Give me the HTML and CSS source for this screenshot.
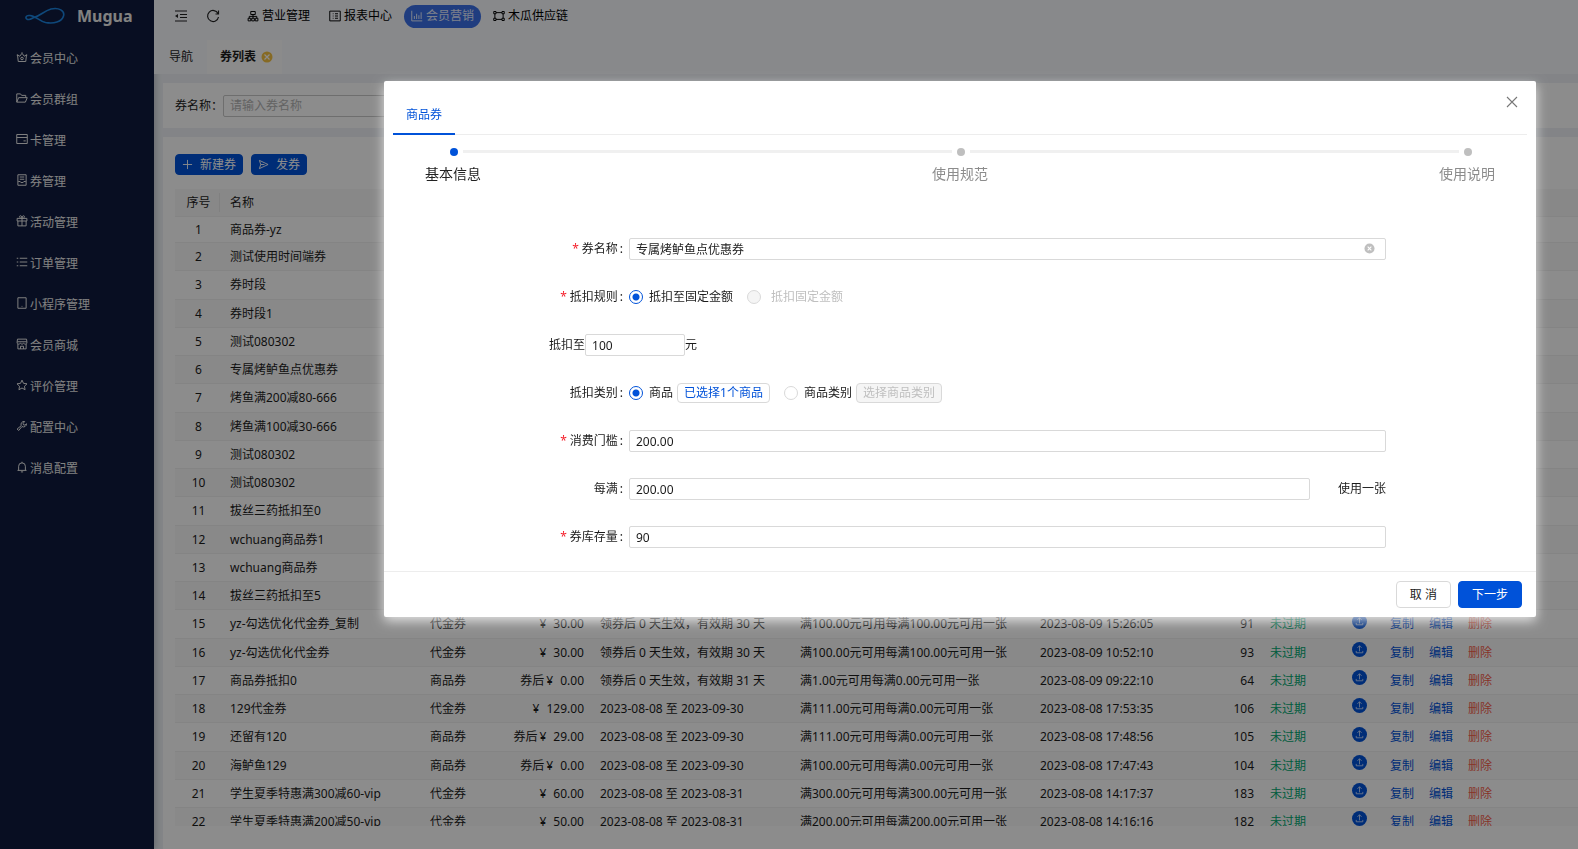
FILE: index.html
```html
<!DOCTYPE html>
<html lang="zh-CN">
<head>
<meta charset="utf-8">
<title>Mugua 券列表</title>
<link rel="stylesheet" href="styles.css">
</head>
<body>
<svg class="defs" aria-hidden="true">
  <symbol id="up" viewBox="0 0 16 16"><circle cx="8" cy="8" r="8" fill="#0052d9"/><path d="M8 10V4M5.800 6.200L8 4l2.200 2.200M4.500 9.500v2h7v-2" fill="none" stroke="#cfe0ff" stroke-width=".9"/></symbol>
</svg>
<div class="app">
  <aside class="sidebar">
    <div class="brand">
      <svg class="logo" viewBox="0 0 40 18"><path d="M9 10.500C15 9 19 4 26 2c8-2 14 2 12.500 7-1.500 6-10 8-18 6.500C14 14 11 9 5 8.500 0 8-.5 12.500 4 12.500c2 0 3.500-1.500 5-2" fill="none" stroke="#1b84e0" stroke-width="1.600"/></svg>
      <span>Mugua</span>
    </div>
    <nav class="menu">
      <a href="#"><svg class="ico" viewBox="0 0 16 16"><path d="M2 5l3 2 3-4 3 4 3-2-1 9H3zM1 5.500h1M14 5.500h1M8 2.500v-1"/><circle cx="8" cy="10" r="1.700"/></svg>会员中心</a>
      <a href="#"><svg class="ico" viewBox="0 0 16 16"><path d="M1 13.500l2.500-6H15l-2.500 6zM1 13.500v-11h5l1.500 2H13v3"/></svg>会员群组</a>
      <a href="#"><svg class="ico" viewBox="0 0 16 16"><path d="M1 2h14v12H1zM1 6h14M10 10.500h3"/></svg>卡管理</a>
      <a href="#"><svg class="ico" viewBox="0 0 16 16"><path d="M2.500 1h11v14h-11zM5 4h6M5 7h6M3 10h2.500c0 2 5 2 5 0H13"/></svg>券管理</a>
      <a href="#"><svg class="ico" viewBox="0 0 16 16"><path d="M1.500 4.500h13V8h-13zM2.500 8v6.500h11V8M8 4.500v10M8 4.500C4 4.500 4 1 6 1s2 3.500 2 3.500S8 1 10 1s2 3.500-2 3.500"/></svg>活动管理</a>
      <a href="#"><svg class="ico" viewBox="0 0 16 16"><path d="M5 3h10M5 8h10M5 13h10M1 3h2M1 8h2M1 13h2"/></svg>订单管理</a>
      <a href="#"><svg class="ico" viewBox="0 0 16 16"><path d="M2.500 1h11v14h-11zM7.500 12.500h1"/></svg>小程序管理</a>
      <a href="#"><svg class="ico" viewBox="0 0 16 16"><path d="M2 1.500h12M2 1.500L1.500 5h13L14 1.500M1.500 5v2c1 1.500 3 1.500 4.300 0 1 1.500 3.400 1.500 4.400 0 1.300 1.500 3.300 1.500 4.300 0V5M2.500 8v6.500h11V8M6 14.500V11h4v3.500"/></svg>会员商城</a>
      <a href="#"><svg class="ico" viewBox="0 0 16 16"><path d="M8 1.500l2 4.300 4.700.600-3.400 3.300.800 4.600L8 12l-4.100 2.300.800-4.600L1.300 6.400 6 5.800z"/></svg>评价管理</a>
      <a href="#"><svg class="ico" viewBox="0 0 16 16"><path d="M14 5a4 4 0 0 1-6 3.700L3.500 14 1.500 12 7 7.500A4 4 0 0 1 11.500 2L9.500 4.500l.500 2 2 .300z"/></svg>配置中心</a>
      <a href="#"><svg class="ico" viewBox="0 0 16 16"><path d="M3.500 12.500V7a4.500 4.500 0 0 1 9 0v5.500M2 12.500h12M8 2.500V1M6.500 14.500h3"/></svg>消息配置</a>
    </nav>
  </aside>

  <div class="main">
    <header class="top">
      <div class="topbar">
        <button class="tool" aria-label="收起菜单"><svg viewBox="0 0 14 14"><path d="M1 2h12M6 5.500h7M6 8.500h7M1 12h12" /><path d="M4 5v4L1 7z" class="solid"/></svg></button>
        <button class="tool" aria-label="刷新"><svg viewBox="0 0 14 14"><path d="M12 4.500A5.500 5.500 0 1 0 12.500 8M12.500 1.500v3.500H9.500"/></svg></button>
        <nav class="modules">
          <a href="#"><svg class="ico" viewBox="0 0 16 16"><path d="M5 2h6v4H5zM1.500 11h3.500v3.500H1.500zM6.300 11h3.500v3.500H6.300zM11 11h3.500v3.500H11zM8 6v5M3 11V8.500h10V11"/></svg>营业管理</a>
          <a href="#"><svg class="ico" viewBox="0 0 16 16"><path d="M1 1.500h14v13H1zM5 5h1M5 8h1M5 11h1M8 5h4M8 8h4M8 11h4"/></svg>报表中心</a>
          <a href="#" class="current"><svg class="ico" viewBox="0 0 16 16"><path d="M1 1v13.500h14M4.500 12V8M7.500 12V5M10.500 12V7M13.500 12V3"/></svg>会员营销</a>
          <a href="#"><svg class="ico" viewBox="0 0 16 16"><path d="M1 2h3v3H1zM12 2h3v3h-3zM1 11h3v3H1zM12 11h3v3h-3zM4 3.500h8M4 12.500h8M2.500 5v6M13.500 5v6"/></svg>木瓜供应链</a>
        </nav>
      </div>
      <nav class="pages">
        <a href="#">导航</a>
        <a href="#" class="current">券列表<svg viewBox="0 0 12 12"><circle cx="6" cy="6" r="5.500" fill="#f5c242"/><path d="M3.500 3.500l5 5M8.500 3.500l-5 5" stroke="#fff" stroke-width="1.200"/></svg></a>
      </nav>
    </header>

    <section class="panel search">
      <label for="q">券名称：</label>
      <input id="q" class="field" type="text" placeholder="请输入券名称">
    </section>

    <section class="panel list">
      <div class="actions">
        <button class="btn primary"><svg viewBox="0 0 12 12"><path d="M6 1v10M1 6h10"/></svg>新建券</button>
        <button class="btn primary"><svg viewBox="0 0 12 12"><path d="M1.500 1.500L11 6l-9.500 4.500L3 6zM3 6h4"/></svg>发券</button>
      </div>
      <div class="scroll">
        <table>
          <colgroup><col class="c-no"><col class="c-name"><col class="c-type"><col class="c-price"><col class="c-valid"><col class="c-rule"><col class="c-time"><col class="c-stock"><col class="c-state"><col class="c-up"><col></colgroup>
          <thead><tr><th>序号</th><th>名称</th><th colspan="9"></th></tr></thead>
          <tbody>
            <tr><td>1</td><td>商品券-yz</td><td colspan="9"></td></tr>
            <tr><td>2</td><td>测试使用时间端券</td><td colspan="9"></td></tr>
            <tr><td>3</td><td>券时段</td><td colspan="9"></td></tr>
            <tr><td>4</td><td>券时段1</td><td colspan="9"></td></tr>
            <tr><td>5</td><td>测试080302</td><td colspan="9"></td></tr>
            <tr><td>6</td><td>专属烤鲈鱼点优惠券</td><td colspan="9"></td></tr>
            <tr><td>7</td><td>烤鱼满200减80-666</td><td colspan="9"></td></tr>
            <tr><td>8</td><td>烤鱼满100减30-666</td><td colspan="9"></td></tr>
            <tr><td>9</td><td>测试080302</td><td colspan="9"></td></tr>
            <tr><td>10</td><td>测试080302</td><td colspan="9"></td></tr>
            <tr><td>11</td><td>拔丝三药抵扣至0</td><td colspan="9"></td></tr>
            <tr><td>12</td><td>wchuang商品券1</td><td colspan="9"></td></tr>
            <tr><td>13</td><td>wchuang商品券</td><td colspan="9"></td></tr>
            <tr><td>14</td><td>拔丝三药抵扣至5</td><td colspan="9"></td></tr>
            <tr><td>15</td><td>yz-勾选优化代金券_复制</td><td>代金券</td><td class="num"><i>¥</i>30.00</td><td>领券后 0 天生效，有效期 30 天</td><td>满100.00元可用每满100.00元可用一张</td><td>2023-08-09 15:26:05</td><td class="num">91</td><td class="ok">未过期</td><td class="up"><button aria-label="上架"><svg><use href="#up"/></svg></button></td><td class="ops"><a href="#">复制</a><a href="#">编辑</a><a href="#" class="del">删除</a></td></tr>
            <tr><td>16</td><td>yz-勾选优化代金券</td><td>代金券</td><td class="num"><i>¥</i>30.00</td><td>领券后 0 天生效，有效期 30 天</td><td>满100.00元可用每满100.00元可用一张</td><td>2023-08-09 10:52:10</td><td class="num">93</td><td class="ok">未过期</td><td class="up"><button aria-label="上架"><svg><use href="#up"/></svg></button></td><td class="ops"><a href="#">复制</a><a href="#">编辑</a><a href="#" class="del">删除</a></td></tr>
            <tr><td>17</td><td>商品券抵扣0</td><td>商品券</td><td class="num">券后<i>¥</i>0.00</td><td>领券后 0 天生效，有效期 31 天</td><td>满1.00元可用每满0.00元可用一张</td><td>2023-08-09 09:22:10</td><td class="num">64</td><td class="ok">未过期</td><td class="up"><button aria-label="上架"><svg><use href="#up"/></svg></button></td><td class="ops"><a href="#">复制</a><a href="#">编辑</a><a href="#" class="del">删除</a></td></tr>
            <tr><td>18</td><td>129代金券</td><td>代金券</td><td class="num"><i>¥</i>129.00</td><td>2023-08-08 至 2023-09-30</td><td>满111.00元可用每满0.00元可用一张</td><td>2023-08-08 17:53:35</td><td class="num">106</td><td class="ok">未过期</td><td class="up"><button aria-label="上架"><svg><use href="#up"/></svg></button></td><td class="ops"><a href="#">复制</a><a href="#">编辑</a><a href="#" class="del">删除</a></td></tr>
            <tr><td>19</td><td>还留有120</td><td>商品券</td><td class="num">券后<i>¥</i>29.00</td><td>2023-08-08 至 2023-09-30</td><td>满111.00元可用每满0.00元可用一张</td><td>2023-08-08 17:48:56</td><td class="num">105</td><td class="ok">未过期</td><td class="up"><button aria-label="上架"><svg><use href="#up"/></svg></button></td><td class="ops"><a href="#">复制</a><a href="#">编辑</a><a href="#" class="del">删除</a></td></tr>
            <tr><td>20</td><td>海鲈鱼129</td><td>商品券</td><td class="num">券后<i>¥</i>0.00</td><td>2023-08-08 至 2023-09-30</td><td>满100.00元可用每满0.00元可用一张</td><td>2023-08-08 17:47:43</td><td class="num">104</td><td class="ok">未过期</td><td class="up"><button aria-label="上架"><svg><use href="#up"/></svg></button></td><td class="ops"><a href="#">复制</a><a href="#">编辑</a><a href="#" class="del">删除</a></td></tr>
            <tr><td>21</td><td>学生夏季特惠满300减60-vip</td><td>代金券</td><td class="num"><i>¥</i>60.00</td><td>2023-08-08 至 2023-08-31</td><td>满300.00元可用每满300.00元可用一张</td><td>2023-08-08 14:17:37</td><td class="num">183</td><td class="ok">未过期</td><td class="up"><button aria-label="上架"><svg><use href="#up"/></svg></button></td><td class="ops"><a href="#">复制</a><a href="#">编辑</a><a href="#" class="del">删除</a></td></tr>
            <tr><td>22</td><td>学生夏季特惠满200减50-vip</td><td>代金券</td><td class="num"><i>¥</i>50.00</td><td>2023-08-08 至 2023-08-31</td><td>满200.00元可用每满200.00元可用一张</td><td>2023-08-08 14:16:16</td><td class="num">182</td><td class="ok">未过期</td><td class="up"><button aria-label="上架"><svg><use href="#up"/></svg></button></td><td class="ops"><a href="#">复制</a><a href="#">编辑</a><a href="#" class="del">删除</a></td></tr>
          </tbody>
        </table>
      </div>
    </section>
  </div>
</div>

<div class="mask">
  <div class="modal" role="dialog" aria-label="商品券">
    <button class="close" aria-label="关闭"><svg viewBox="0 0 12 12"><path d="M1 1l10 10M11 1L1 11"/></svg></button>
    <div class="tabs"><a href="#">商品券</a></div>
    <ol class="steps">
      <li class="active"><div class="head"><span class="dot"></span><span class="line"></span></div><span class="title">基本信息</span></li>
      <li><div class="head"><span class="dot"></span><span class="line"></span></div><span class="title">使用规范</span></li>
      <li><div class="head"><span class="dot"></span></div><span class="title">使用说明</span></li>
    </ol>
    <form class="form">
      <div class="row"><label class="lab req" for="f1">券名称</label><div class="clearable"><input id="f1" class="field" type="text" value="专属烤鲈鱼点优惠券"><button type="button" aria-label="清空"><svg viewBox="0 0 12 12"><circle cx="6" cy="6" r="5.500" fill="#bfbfbf"/><path d="M4 4l4 4M8 4L4 8" stroke="#fff" stroke-width="1.200"/></svg></button></div></div>
      <div class="row"><span class="lab req">抵扣规则</span><label class="opt"><input type="radio" name="rule" checked>抵扣至固定金额</label><label class="opt off"><input type="radio" name="rule" disabled>抵扣固定金额</label></div>
      <div class="row"><label for="f2">抵扣至</label><input id="f2" class="field short" type="text" value="100"><span>元</span></div>
      <div class="row"><span class="lab">抵扣类别</span><label class="opt"><input type="radio" name="kind" checked>商品</label><button type="button" class="pick">已选择1个商品</button><label class="opt second"><input type="radio" name="kind">商品类别</label><button type="button" class="pick" disabled>选择商品类别</button></div>
      <div class="row"><label class="lab req" for="f3">消费门槛</label><input id="f3" class="field" type="text" value="200.00"></div>
      <div class="row"><label class="lab" for="f4">每满</label><input id="f4" class="field" type="text" value="200.00"><span class="suffix">使用一张</span></div>
      <div class="row"><label class="lab req" for="f5">券库存量</label><input id="f5" class="field" type="text" value="90"></div>
    </form>
    <footer class="foot"><button class="btn">取 消</button><button class="btn primary">下一步</button></footer>
  </div>
</div>
</body>
</html>
```
FILE: styles.css
```css
* { box-sizing: border-box; }
body { margin: 0; font: 12px/20px "Noto Sans", "Noto Sans CJK SC", sans-serif; color: #1c1c1c; }
a { color: inherit; text-decoration: none; }
button, input { font: inherit; color: inherit; margin: 0; }
button { padding: 0; border: 0; background: none; cursor: pointer; }
svg { display: block; flex: none; }
.defs { position: absolute; width: 0; height: 0; }
.ico { width: 12px; height: 12px; fill: none; stroke: currentColor; stroke-width: 1.3; }

.app { display: flex; height: 100vh; overflow: hidden; background: #eef1f6; }
.sidebar { flex: none; width: 154px; background: #101b3e; color: #ececec; box-shadow: 2px 0 6px rgba(0, 21, 41, .2); }
.brand { display: flex; align-items: center; gap: 12px; height: 32px; padding-left: 25px; font-size: 16px; font-weight: 700; }
.logo { width: 40px; height: 18px; }
.menu { padding-top: 6px; }
.menu a { display: flex; align-items: center; gap: 2px; height: 41px; padding-left: 16px; }
.menu .ico { margin-bottom: 3px; }

.main { flex: 1; min-width: 0; display: flex; flex-direction: column; gap: 9px; }
.top { background: #f7f9fe; height: 74px; }
.topbar { display: flex; align-items: center; height: 32px; padding-left: 20px; }
.tool { margin-right: 18px; }
.tool svg { width: 14px; height: 14px; fill: none; stroke: #222; stroke-width: 1.2; }
.tool .solid { fill: #222; stroke: none; }
.modules { display: flex; gap: 5px; margin-left: 2px; }
.modules a { display: flex; align-items: center; gap: 3px; height: 23px; padding: 0 7px; border-radius: 12px; color: #000; }
.modules .current { background: #3b70e8; color: #e4ecff; }
.pages { display: flex; height: 34px; margin-top: 8px; }
.pages a { display: flex; align-items: center; gap: 5px; padding: 0 13px; }
.pages a:first-child { padding: 0 14px 0 15px; }
.pages .current { background: #fdfdfd; font-weight: 700; padding: 0 9px 0 13px; }
.pages svg { width: 12px; height: 12px; }

.panel { background: #fff; margin-left: 9px; padding: 0 0 0 12px; }
.search { display: flex; align-items: center; height: 45px; }
.field { flex: 1; min-width: 0; height: 22px; padding: 0 6px; border: 1px solid #d9d9d9; border-radius: 2px; background: #fff; outline: 0; }
.search .field { flex: none; width: 220px; border-color: #c8c8c8; }
.field::placeholder { color: #b4b4b4; opacity: 1; }
.list { flex: 1; min-height: 0; display: flex; flex-direction: column; padding: 17px 0 23px 12px; }
.actions { display: flex; gap: 8px; margin-bottom: 14px; }
.btn { height: 27px; padding: 0 12px; border: 1px solid #d9d9d9; border-radius: 4px; background: #fff; }
.btn.primary { border-color: #0052d9; background: #0052d9; color: #fff; }
.actions .btn { display: flex; align-items: center; gap: 7px; height: 21px; padding: 0 6px; }
.actions svg { width: 11px; height: 11px; fill: none; stroke: #fff; }
.scroll { flex: 1; min-height: 0; overflow: hidden; }

table { width: 100%; table-layout: fixed; border-collapse: separate; border-spacing: 0; }
.c-no { width: 47px; }
.c-name { width: 200px; }
.c-type { width: 70px; }
.c-price { width: 100px; }
.c-valid { width: 200px; }
.c-rule { width: 240px; }
.c-time { width: 150px; }
.c-stock { width: 80px; }
.c-state { width: 72px; }
.c-up { width: 50px; }
th, td { height: 28px; padding: 0 8px; border-bottom: 1px solid #f0f0f0; text-align: left; font-weight: 400; white-space: nowrap; }
th { height: 28px; background: #f8f8f8; }
th:first-child, td:first-child { text-align: center; padding: 0; }
th:first-child { background: linear-gradient(#e9e9e9, #e9e9e9) no-repeat 44px center / 1px 19px #f8f8f8; }
tbody tr:first-child td { height: 26px; }
tbody tr:nth-child(4n + 3) td { height: 29px; }
tbody tr:nth-child(even) td { background: #fafafa; }
td.num { text-align: right; }
.num i { margin: 0 7px 0 2px; font-style: normal; }
.ok { color: #00a870; }
td.up { padding: 0; }
.up button { display: block; margin: 0 auto 6px; }
.up svg { width: 15px; height: 15px; }
.ops { padding-left: 6px; }
.ops a { margin-right: 15px; color: #0052d9; }
.ops .del { color: #f5604a; }

.mask { position: fixed; inset: 0; display: flex; align-items: flex-start; padding: 81px 42px 0 384px; background: rgba(0, 0, 0, .45); }
.modal { position: relative; flex: 1; background: #fff; border-radius: 2px; box-shadow: 0 4px 12px rgba(255, 255, 255, .75); }
.close { position: absolute; top: 15px; right: 18px; }
.close svg { width: 12px; height: 12px; fill: none; stroke: #777; stroke-width: 1.1; }
.tabs { display: flex; height: 54px; margin: 0 9px; border-bottom: 1px solid #ededed; }
.tabs a { margin-bottom: -1px; padding: 24px 13px 0; border-bottom: 2px solid #0052d9; color: #0052d9; }
.steps { display: flex; margin: 0; padding: 12px 41px 0 41px; list-style: none; }
.steps li { flex: 1; }
.steps li:last-child { flex: none; width: 56px; }
.head { display: flex; align-items: center; gap: 5px; height: 9px; padding-left: 25px; margin-bottom: 7px; }
.dot { flex: none; width: 8px; height: 8px; border-radius: 50%; background: #bfbfbf; }
.active .dot { background: #0052d9; }
.line { flex: 1; height: 3px; margin-right: -20px; background: #f0f0f0; }
.title { display: block; font-size: 14px; line-height: 22px; color: #8c8c8c; }
.active .title { color: #222; }

.form { display: flex; flex-direction: column; gap: 26px; padding: 53px 150px 23px 165px; }
.row { display: flex; align-items: center; height: 22px; }
.lab { flex: none; width: 80px; padding-right: 6px; text-align: right; }
.lab::after { content: ":"; margin-left: 2px; }
.req::before { content: "*"; margin-right: 3px; color: #f5222d; }
.short { flex: none; width: 100px; }
.clearable { flex: 1; display: flex; position: relative; }
.clearable button { position: absolute; top: 5px; right: 11px; }
.clearable svg { width: 11px; height: 11px; }
.opt { display: flex; align-items: center; gap: 6px; }
.opt input { appearance: none; flex: none; width: 14px; height: 14px; border: 1px solid #d9d9d9; border-radius: 50%; background: #fff; }
.opt input:checked { border-color: #0052d9; background: radial-gradient(circle, #0052d9 3px, #fff 4px); }
.opt input:disabled { background: #f5f5f5; }
.opt.off { gap: 10px; margin-left: 14px; color: #bfbfbf; }
.opt.second { margin-left: 14px; }
.pick { display: flex; align-items: center; height: 20px; margin-left: 4px; padding: 0 6px; border: 1px solid #d9d9d9; border-radius: 4px; color: #0052d9; }
.pick:disabled { background: #f5f5f5; color: #bfbfbf; }
.suffix { margin-left: 28px; }
.foot { display: flex; justify-content: flex-end; gap: 7px; padding: 9px 14px; border-top: 1px solid #ededed; }
.foot .btn { padding: 0 13px; }
```
